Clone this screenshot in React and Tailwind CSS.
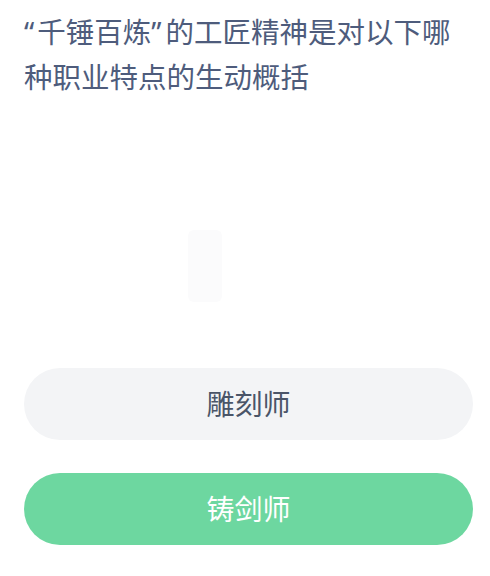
import React from 'react';

const font = { fontFamily: '"Noto Sans", "Noto Sans CJK SC", sans-serif' };

const App = () => {
  return (
    <div className="w-[490px] h-[576px] bg-white overflow-hidden" style={font}>
      {/* Question */}
      <div className="pl-6 pr-[26px] pt-[10px]">
        <p className="text-[28.5px] leading-[45px] text-[#4e5c7c]">
          <span className="mr-[3px]">“</span>千锤百炼<span className="mr-[4px]">”</span>的工匠精神是对以下哪种职业特点的生动概括
        </p>
      </div>

      {/* Faint placeholder */}
      <div className="h-[268px] pl-[188px] pt-[130px]">
        <div className="w-[34px] h-[72px] rounded-md bg-[#fbfbfc]" />
      </div>

      {/* Options */}
      <div className="pl-6 pr-[17px] flex flex-col gap-[33px]">
        <button className="h-[72px] w-full rounded-full bg-[#f3f4f6] text-[28px] text-[#4a5568] flex items-center justify-center">
          雕刻师
        </button>
        <button className="h-[72px] w-full rounded-full bg-[#6dd7a0] text-[28px] text-white flex items-center justify-center">
          铸剑师
        </button>
      </div>
    </div>
  );
};

export default App;
